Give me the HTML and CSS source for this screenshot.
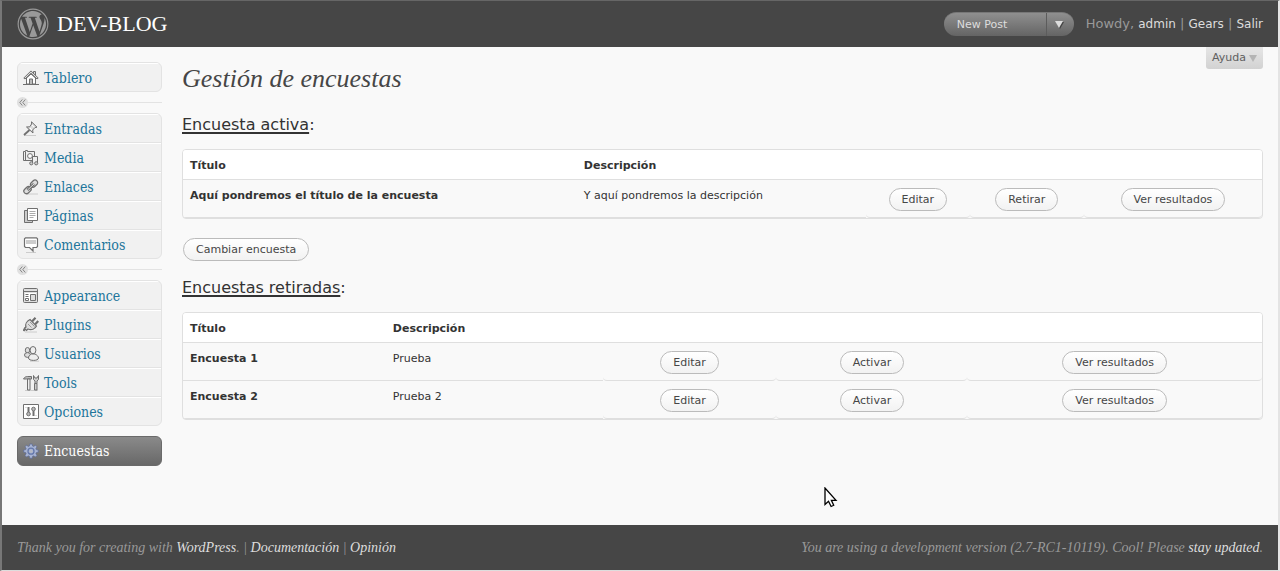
FILE: index.html
```
<!DOCTYPE html>
<html lang="es">
<head>
<meta charset="utf-8">
<title>Gestión de encuestas</title>
<link rel="stylesheet" href="styles.css">
</head>
<body>
<header class="topbar">
  <svg class="logo" viewBox="-.6 -.6 25.2 25.2" aria-hidden="true"><circle cx="12" cy="12" r="11.700" fill="none" stroke="#999" stroke-width=".9"/><path fill="#999" transform="translate(.6 .6) scale(.95)" d="M21.469 6.825c.84 1.537 1.318 3.3 1.318 5.175 0 3.979-2.156 7.456-5.363 9.325l3.295-9.527c.615-1.54.82-2.771.82-3.864 0-.405-.026-.78-.07-1.11m-7.981.105c.647-.03 1.232-.105 1.232-.105.582-.075.514-.93-.067-.899 0 0-1.755.135-2.88.135-1.064 0-2.85-.15-2.85-.15-.585-.03-.661.855-.075.885 0 0 .54.061 1.125.09l1.68 4.605-2.37 7.08L5.354 6.9c.649-.03 1.234-.1 1.234-.1.585-.075.516-.93-.065-.896 0 0-1.746.138-2.874.138-.2 0-.438-.008-.69-.015C4.911 3.15 8.235 1.215 12 1.215c2.809 0 5.365 1.072 7.286 2.833-.046-.003-.091-.009-.141-.009-1.06 0-1.812.923-1.812 1.914 0 .89.513 1.643 1.06 2.531.411.72.89 1.643.89 2.977 0 .915-.354 1.994-.821 3.479l-1.075 3.585-3.9-11.61.001.014zM12 22.784c-1.059 0-2.081-.153-3.048-.437l3.237-9.406 3.315 9.087c.024.053.05.101.078.149-1.12.393-2.325.609-3.582.609M1.211 12c0-1.564.336-3.05.935-4.39L7.29 21.709C3.694 19.96 1.212 16.271 1.211 12"/></svg>
  <a class="site-title" href="#">DEV-BLOG</a>
  <div class="quick">
    <a class="quick-link" href="#">New Post</a>
    <button class="quick-toggle" type="button" aria-label="Más acciones"><svg width="9" height="8" viewBox="0 0 9 8"><path d="M1 1h8L5 8z" fill="#444"/><path d="M0 0h8L4 7z" fill="#ddd"/></svg></button>
  </div>
  <p class="user">Howdy, <a href="#">admin</a> | <a href="#">Gears</a> | <a href="#">Salir</a></p>
</header>

<div class="page">
  <nav class="menu" aria-label="Menú">
    <ul class="group">
      <li><a href="#"><svg class="icon" viewBox="0 0 16 16"><path d="M3.500 8v6h9V8l-4.500-4z" fill="#fff"/><path d="M10.500 4V1.500h2V6" fill="#ddd"/><path d="M.8 8L8 .9 15.200 8l-1.200 1-6-5.800L2 9z" fill="#ddd"/><path d="M6.500 14V9h3v5" fill="#bbb"/><path d="M0 14.500h16"/></svg>Tablero</a></li>
    </ul>
    <button class="fold" type="button" aria-label="Plegar menú"><span class="knob"><svg width="7" height="7" viewBox="0 0 7 7"><path d="M3.300.5l-2.500 3 2.500 3M6.300.5l-2.500 3 2.500 3" fill="none" stroke="#888"/></svg></span></button>
    <ul class="group">
      <li><a href="#"><svg class="icon" viewBox="0 0 16 16"><path d="M1 14.500h12" stroke="#ccc"/><path d="M6.500 9L1 14" stroke-width="1.800"/><path d="M8.500.8l5.500 5.400-2 .3-2.300 2.500.3 3L3.500 6l3.200-.2L8.600 3z" fill="#ddd"/><path d="M9 4l2 2.200M7 7l2 2" stroke="#fff"/></svg>Entradas</a></li>
      <li><a href="#"><svg class="icon" viewBox="0 0 16 16"><path d="M.5 1.500h2v-1h2v1h7v9H.5z" fill="#eee"/><path d="M2.500 2v8"/><circle cx="7" cy="6" r="2.400" fill="#fff"/><path d="M9.500 13v-6.500h5v6" fill="#eee"/><circle cx="8.300" cy="13.300" r="1.600" fill="#ccc"/><circle cx="13.200" cy="13.300" r="1.600" fill="#ccc"/></svg>Media</a></li>
      <li><a href="#"><svg class="icon" viewBox="0 0 16 16"><path d="M4 15h11" stroke="#ccc"/><g fill="#ddd" stroke-width="1.300"><rect x="7" y="2" width="8" height="5.200" rx="2.600" transform="rotate(-43 11 4.600)"/><rect x=".5" y="8.600" width="8" height="5.200" rx="2.600" transform="rotate(-43 4.500 11.200)"/></g><path d="M4.500 11l6.500-6" stroke-width="3"/><path d="M4.500 11l6.500-6" stroke="#ddd" stroke-width="1"/></svg>Enlaces</a></li>
      <li><a href="#"><svg class="icon" viewBox="0 0 16 16"><path d="M1.500 2.500h8v12h-8z" fill="#ccc"/><path d="M4.500.500h10v12h-10z" fill="#fff"/><path d="M6.500 3.500h6M6.500 5.500h6M6.500 7.500h6M6.500 9.500h4" stroke="#aaa"/></svg>Páginas</a></li>
      <li><a href="#"><svg class="icon" viewBox="0 0 16 16"><path d="M3 15.500h10" stroke="#ccc"/><path d="M2.500 .8h11l1 1v7.700l-1 1h-3.500V14L6.500 10.500h-4l-1-1V1.800z" fill="#fff" stroke-width="1.200"/><path d="M3 3h10v4H3z" fill="#ccc" stroke="none"/></svg>Comentarios</a></li>
    </ul>
    <button class="fold" type="button" aria-label="Plegar menú"><span class="knob"><svg width="7" height="7" viewBox="0 0 7 7"><path d="M3.300.5l-2.500 3 2.500 3M6.300.5l-2.500 3 2.500 3" fill="none" stroke="#888"/></svg></span></button>
    <ul class="group">
      <li><a href="#"><svg class="icon" viewBox="0 0 16 16"><rect x=".5" y=".5" width="14" height="14" rx="1" fill="#ddd"/><path d="M1 3.500h13" /><path d="M2 5h11v8H2z" fill="#fff" stroke="none"/><path d="M2.500 6.500h3M2.500 8.500h3M2.500 12.500h3v-2h-3z"/><path d="M7.500 6.500h5v6h-5z" fill="#ddd"/></svg>Appearance</a></li>
      <li><a href="#"><svg class="icon" viewBox="0 0 16 16"><path d="M2 15h12" stroke="#ccc"/><path d="M.5 14c1-1.500 1.500-3 3-4M9 4.500L12.500.8M12 7.500L15.200 4" stroke-width="2.200"/><path d="M7 2.500l6.500 6.500c-1.500 3-5 4.500-8.500 3L3.500 13.500 1.500 11.500 3 10C1.800 7 4 4 7 2.500z" fill="#ddd" stroke-width="1.200"/><path d="M7 5l4.500 4.500M5 7l3.500 3.500" stroke="#999"/></svg>Plugins</a></li>
      <li><a href="#"><svg class="icon" viewBox="0 0 16 16"><path d="M7 15.200h9" stroke="#ccc"/><g fill="#ddd"><ellipse cx="4.500" cy="4.200" rx="2.200" ry="2.700"/><ellipse cx="4.500" cy="9" rx="3" ry="2.400"/></g><g fill="#eee"><ellipse cx="10" cy="4.200" rx="2.900" ry="3.700"/><path d="M8.500 8h3.500c2 1 3.500 2.500 3.500 4 0 3.200-10 3.200-10 0 0-1.500 1-3 3-4z"/></g></svg>Usuarios</a></li>
      <li><a href="#"><svg class="icon" viewBox="0 0 16 16"><path d="M2 15.500h13" stroke="#ccc"/><path d="M.5 4C1.500 2 3 1.500 4.500 1.500h4v2.500H3.500z" fill="#bbb"/><path d="M4.500 4h2.500v11h-2.500z" fill="#eee"/><path d="M10.500.5v4l1.500 1.500v2.500h2V6l1.500-1.500v-4L14 3h-2z" fill="#ccc"/><path d="M11.500 8.500h2.500v6.500h-2.500z" fill="#ccc"/></svg>Tools</a></li>
      <li><a href="#"><svg class="icon" viewBox="0 0 16 16"><path d="M.5 .5h15v14H.5z" fill="#fff"/><path d="M5.500 3v5M10.500 7v5" stroke-width="2"/><circle cx="5.500" cy="10" r="1.800" fill="#bbb"/><circle cx="10.500" cy="5" r="1.800" fill="#bbb"/><path d="M2.500 3.500h1M12.500 11.500h1" stroke="#bbb"/></svg>Opciones</a></li>
    </ul>
    <a class="current" href="#"><svg class="icon" viewBox="0 0 16 16"><path d="M6.800 1h2.400l.4 2 1.100.4 1.700-1.200 1.600 1.600-1.100 1.800.4 1 2 .4v2.200l-2 .4-.4 1.100 1.100 1.700-1.600 1.600-1.700-1.100-1.100.4-.4 2H6.800l-.4-2-1.100-.4L3.600 14 2 12.400l1.100-1.700-.4-1.100-2-.4V7l2-.4.4-1L2 3.800l1.600-1.600 1.700 1.200L6.400 3z" fill="#a7b3d2" stroke="#5d6c96" stroke-width=".7"/><circle cx="8" cy="8.200" r="3" fill="none" stroke="#6478ab" stroke-width="1.300"/><circle cx="8" cy="8.200" r="1.500" fill="#b5b9c4" stroke="none"/></svg>Encuestas</a>
  </nav>

  <main class="content">
    <div class="heading">
      <h1>Gestión de encuestas</h1>
      <button class="help" type="button">Ayuda<svg width="8" height="7" viewBox="0 0 8 7"><path d="M0 0h8L4 7z" fill="#b4b4b4"/></svg></button>
    </div>

    <h2><u>Encuesta activa</u>:</h2>
    <table class="polls">
      <colgroup><col class="a-title"><col class="a-desc"><col class="a-edit"><col class="a-state"><col></colgroup>
      <thead><tr><th scope="col">Título</th><th scope="col">Descripción</th><th></th><th></th><th></th></tr></thead>
      <tbody>
        <tr><th scope="row">Aquí pondremos el título de la encuesta</th><td>Y aquí pondremos la descripción</td><td class="act"><button class="btn" type="button">Editar</button></td><td class="act"><button class="btn" type="button">Retirar</button></td><td class="act"><button class="btn" type="button">Ver resultados</button></td></tr>
      </tbody>
    </table>
    <p class="change"><button class="btn" type="button">Cambiar encuesta</button></p>

    <h2><u>Encuestas retiradas</u>:</h2>
    <table class="polls">
      <colgroup><col class="r-title"><col class="r-desc"><col class="r-edit"><col class="r-state"><col></colgroup>
      <thead><tr><th scope="col">Título</th><th scope="col">Descripción</th><th></th><th></th><th></th></tr></thead>
      <tbody>
        <tr><th scope="row">Encuesta 1</th><td>Prueba</td><td class="act"><button class="btn" type="button">Editar</button></td><td class="act"><button class="btn" type="button">Activar</button></td><td class="act"><button class="btn" type="button">Ver resultados</button></td></tr>
        <tr><th scope="row">Encuesta 2</th><td>Prueba 2</td><td class="act"><button class="btn" type="button">Editar</button></td><td class="act"><button class="btn" type="button">Activar</button></td><td class="act"><button class="btn" type="button">Ver resultados</button></td></tr>
      </tbody>
    </table>
  </main>
</div>

<footer class="footer">
  <p>Thank you for creating with <a href="#">WordPress</a>. | <a href="#">Documentación</a> | <a href="#">Opinión</a></p>
  <p>You are using a development version (2.7-RC1-10119). Cool! Please <a href="#">stay updated</a>.</p>
</footer>

<svg class="pointer" width="14" height="21" viewBox="0 0 14 21" aria-hidden="true"><path d="M1 1v16.500l3.500-3.200 2.600 5.200 2.600-1.200-2.300-5H12z" fill="#fff" stroke="#000" stroke-width="1.300"/></svg>
</body>
</html>
```
FILE: styles.css
```
* { box-sizing: border-box; }

body {
  margin: 0;
  min-height: 100vh;
  display: flex;
  flex-direction: column;
  position: relative;
  border-style: solid;
  border-width: 1px 2px 1px 2px;
  border-color: #666 #e4e4e4 #ddd #777;
  background: #f9f9f9;
  color: #333;
  font: 11px/16px "DejaVu Sans", sans-serif;
}

h1, h2, p, ul { margin: 0; padding: 0; font-weight: normal; }
ul { list-style: none; }
a { text-decoration: none; }
button { font: inherit; color: inherit; cursor: pointer; }

/* Top bar */
.topbar {
  display: flex;
  align-items: center;
  height: 46px;
  padding: 0 15px;
  background: #464646;
}
.logo { width: 32px; height: 32px; }
.site-title {
  margin-left: 8px;
  color: #fff;
  font: 22px/32px "Liberation Serif", serif;
}
.quick {
  display: flex;
  width: 130px;
  height: 24px;
  margin-left: auto;
  border-radius: 12px;
  border-top: 1px solid #777;
  overflow: hidden;
  background: linear-gradient(#8f8f8f, #646464);
}
.quick-link { flex: 1; padding-left: 13px; color: #ddd; line-height: 23px; }
.quick-toggle {
  display: flex;
  align-items: center;
  width: 28px;
  padding: 0 0 0 8px;
  border: 0;
  border-left: 1px solid #5c5c5c;
  background: none;
}
.user { margin-left: 12px; color: #999; font-size: 13px; }
.user a { color: #ddd; font-size: 12px; }

/* Columns */
.page { display: flex; flex: 1; gap: 20px; padding: 0 15px; }

/* Side menu */
.menu { width: 145px; flex: none; padding-top: 15px; }
.group {
  border: 1px solid #e3e3e3;
  border-radius: 6px;
  background: #f1f1f1;
  overflow: hidden;
}
.group li + li { border-top: 1px solid #e3e3e3; }
.group a, .current {
  display: flex;
  align-items: center;
  gap: 5px;
  height: 28px;
  padding-left: 5px;
  color: #21759b;
  font: 14px/18px "DejaVu Serif Condensed", "DejaVu Serif", serif;
}
.group a { border-top: 1px solid #fff; }
.icon { width: 16px; height: 16px; fill: none; stroke: #6f6f6f; stroke-width: 1; }
.group + .current {
  height: 30px;
  margin-top: 10px;
  border: 1px solid #6a6a6a;
  border-radius: 6px;
  color: #fff;
  background: linear-gradient(#8a8a8a, #686868);
}
.fold {
  display: flex;
  align-items: center;
  width: 100%;
  height: 21px;
  padding: 0;
  border: 0;
  background: none;
}
.fold::after { content: ""; flex: 1; height: 1px; background: #e3e3e3; }
.knob {
  display: grid;
  place-items: center;
  width: 11px;
  height: 11px;
  border-radius: 50%;
  background: #e0e0e0;
}

/* Content */
.content { flex: 1; min-width: 0; }
.heading { display: flex; align-items: flex-start; justify-content: space-between; }
h1 {
  padding-top: 16px;
  color: #464646;
  font: italic 26px/32px "Liberation Serif", serif;
}
.help {
  display: flex;
  align-items: center;
  gap: 3px;
  height: 22px;
  padding: 0 6px;
  border: 0;
  border-radius: 0 0 3px 3px;
  background: linear-gradient(#e6e6e6, #d2d2d2);
  color: #606060;
}
h2 { margin-top: 20px; font-size: 16px; line-height: 20px; }
h2 u { text-decoration-thickness: 2px; text-underline-offset: 2px; }

/* Poll tables */
.polls {
  width: 100%;
  margin-top: 14px;
  table-layout: fixed;
  border-collapse: separate;
  border-spacing: 0;
  border: 1px solid #dfdfdf;
  border-radius: 4px;
  overflow: hidden;
}
.polls th, .polls td {
  padding: 8px 7px 5px;
  border-bottom: 1px solid #dfdfdf;
  text-align: left;
  vertical-align: top;
  line-height: 16px;
}
.polls th { font-weight: bold; }
.polls thead th { height: 30px; background: #fff; }
.polls .act { padding-bottom: 6px; text-align: center; border-radius: 4px; }
.a-title { width: 36.500%; }
.a-desc { width: 26.800%; }
.a-edit { width: 9.600%; }
.a-state { width: 10.600%; }
.r-title { width: 18.800%; }
.r-desc { width: 20.100%; }
.r-edit { width: 16.100%; }
.r-state { width: 17.700%; }

.btn {
  display: inline-block;
  height: 23px;
  padding: 0 12px;
  border: 1px solid #bbb;
  border-radius: 12px;
  background: linear-gradient(#fff, #f2f2f2);
  color: #464646;
  line-height: 21px;
  vertical-align: top;
}
.change { margin: 19px 0 0 1px; }
.change + h2 { margin-top: 17px; }

/* Footer */
.footer {
  display: flex;
  justify-content: space-between;
  align-items: center;
  height: 45px;
  padding: 0 15px;
  background: #464646;
  color: #999;
  font: italic 14px/20px "Liberation Serif", serif;
}
.footer a { color: #ddd; }

.pointer { position: absolute; left: 822px; top: 486px; }
```
